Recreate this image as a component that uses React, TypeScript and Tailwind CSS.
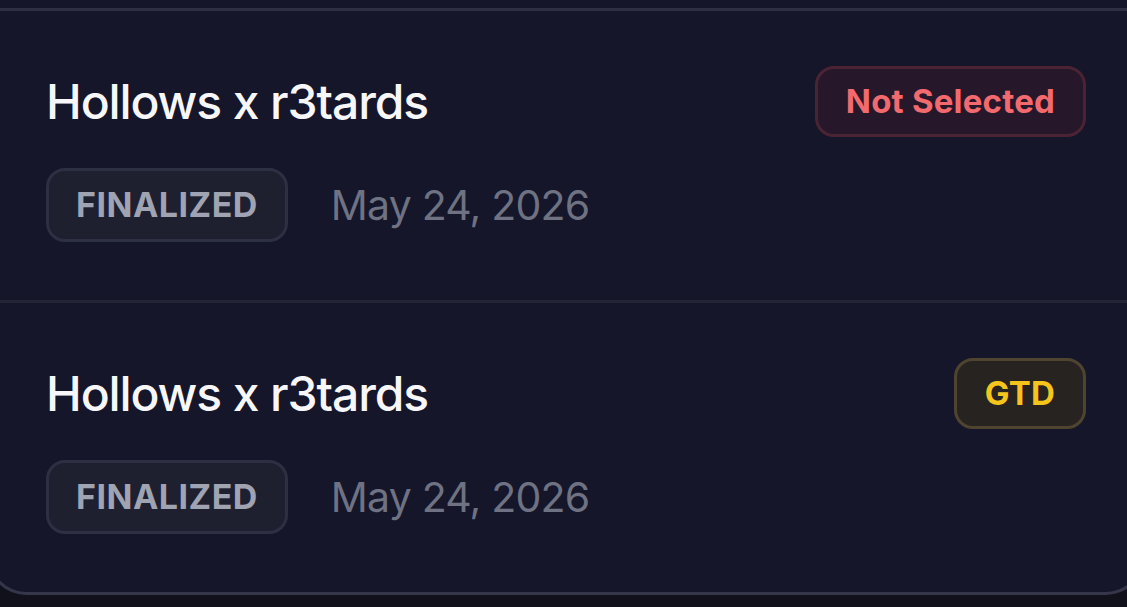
import React from 'react';

type Status = 'not-selected' | 'gtd';

interface Entry {
  id: number;
  title: string;
  phase: string;
  date: string;
  status: Status;
}

const ENTRIES: Entry[] = [
  { id: 1, title: 'Hollows x r3tards', phase: 'FINALIZED', date: 'May 24, 2026', status: 'not-selected' },
  { id: 2, title: 'Hollows x r3tards', phase: 'FINALIZED', date: 'May 24, 2026', status: 'gtd' },
];

const STATUS_STYLE: Record<Status, { label: string; className: string }> = {
  'not-selected': {
    label: 'Not Selected',
    className: 'bg-[#26182a] border-[#4a2434] text-[#f26a6e]',
  },
  gtd: {
    label: 'GTD',
    className: 'bg-[#272320] border-[#4f4430] text-[#f5c51c]',
  },
};

function StatusBadge({ status }: { status: Status }) {
  const s = STATUS_STYLE[status];
  return (
    <span
      className={`h-[71px] flex items-center px-[28px] rounded-[19px] border-[3px] text-[33px] font-bold leading-none tracking-[0.2px] ${s.className}`}
    >
      {s.label}
    </span>
  );
}

export default function App() {
  return (
    <div
      className="w-full h-[607px] overflow-hidden bg-[#10111b]"
      style={{ fontFamily: 'Inter, "Noto Sans", sans-serif' }}
    >
      <div className="w-[1156px] -ml-[12px] bg-[#15162a] border-b-[3px] border-x-[3px] border-[#35364a] rounded-b-[38px]">
        {/* tail of the previous row */}
        <div className="h-[11px] border-b-[3px] border-[#2e2f42]" />

        <div className="divide-y-[3px] divide-[#232436]">
          {ENTRIES.map((e) => (
            <div key={e.id} className="px-[55px] pt-[55px] pb-[58px] flex flex-col gap-[31px]">
              <div className="flex items-center justify-between h-[71px]">
                <h3 className="text-[48px] font-medium text-[#f7f7fa] leading-none tracking-[-1.1px]">
                  {e.title}
                </h3>
                <StatusBadge status={e.status} />
              </div>

              <div className="flex items-center gap-[43px]">
                <span className="h-[74px] flex items-center px-[27px] rounded-[19px] border-[3px] border-[#2d2f42] bg-[#1e2030] text-[34px] font-bold text-[#a0a3b2] leading-none tracking-[0.5px]">
                  {e.phase}
                </span>
                <span className="text-[41px] text-[#6e7282] leading-none tracking-[-0.8px]">{e.date}</span>
              </div>
            </div>
          ))}
        </div>
      </div>
    </div>
  );
}
